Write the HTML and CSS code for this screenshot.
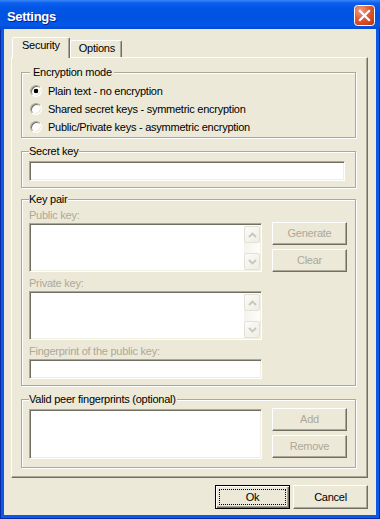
FILE: index.html
```html
<!DOCTYPE html>
<html lang="en">
<head>
    <meta charset="UTF-8">
    <title>Settings</title>
    <link rel="stylesheet" href="styles.css">
</head>
<body>
    <div class="window">
        <div class="titlebar">
            <span class="title">Settings</span>
            <span class="close">
                <svg width="21" height="21" viewBox="0 0 21 21">
                    <defs>
                        <radialGradient id="closeFill" cx="0.3" cy="0.25" r="0.9">
                            <stop offset="0" stop-color="#F0A088"/>
                            <stop offset="0.45" stop-color="#E0603D"/>
                            <stop offset="1" stop-color="#C2380F"/>
                        </radialGradient>
                    </defs>
                    <rect x="0.5" y="0.5" width="20" height="20" rx="3" fill="url(#closeFill)" stroke="#fff"/>
                    <path d="M6 6 L15 15 M15 6 L6 15" stroke="#fff" stroke-width="2.2" stroke-linecap="square"/>
                </svg>
            </span>
        </div>

        <div class="face">
            <div class="tabs">
                <div class="tab tab-active">Security</div>
                <div class="tab">Options</div>
            </div>

            <div class="panel">
                <!-- Encryption mode -->
                <fieldset class="group group-mode">
                    <legend>Encryption mode</legend>
                    <div class="option"><span class="radio checked"></span>Plain text - no encryption</div>
                    <div class="option"><span class="radio"></span>Shared secret keys - symmetric encryption</div>
                    <div class="option"><span class="radio"></span>Public/Private keys - asymmetric encryption</div>
                </fieldset>

                <!-- Secret key -->
                <fieldset class="group group-secret">
                    <legend>Secret key</legend>
                    <input class="edit edit-wide" type="text">
                </fieldset>

                <!-- Key pair -->
                <fieldset class="group group-pair">
                    <legend>Key pair</legend>
                    <div class="pair">
                        <div class="fields">
                            <div class="field-label">Public key:</div>
                            <div class="memo">
                                <div class="scrollbar">
                                    <span class="scroll-btn"><svg width="9" height="6" viewBox="0 0 9 6"><path d="M1 5 L4.5 1.5 L8 5" fill="none" stroke="#C9C6B8" stroke-width="1.8"/></svg></span>
                                    <span class="scroll-btn"><svg width="9" height="6" viewBox="0 0 9 6"><path d="M1 1 L4.5 4.5 L8 1" fill="none" stroke="#C9C6B8" stroke-width="1.8"/></svg></span>
                                </div>
                            </div>
                            <div class="field-label">Private key:</div>
                            <div class="memo">
                                <div class="scrollbar">
                                    <span class="scroll-btn"><svg width="9" height="6" viewBox="0 0 9 6"><path d="M1 5 L4.5 1.5 L8 5" fill="none" stroke="#C9C6B8" stroke-width="1.8"/></svg></span>
                                    <span class="scroll-btn"><svg width="9" height="6" viewBox="0 0 9 6"><path d="M1 1 L4.5 4.5 L8 1" fill="none" stroke="#C9C6B8" stroke-width="1.8"/></svg></span>
                                </div>
                            </div>
                            <div class="field-label">Fingerprint of the public key:</div>
                            <input class="edit" type="text" disabled>
                        </div>
                        <div class="side">
                            <button class="btn" disabled>Generate</button>
                            <button class="btn" disabled>Clear</button>
                        </div>
                    </div>
                </fieldset>

                <!-- Peer fingerprints -->
                <fieldset class="group group-peers">
                    <legend>Valid peer fingerprints (optional)</legend>
                    <div class="pair">
                        <div class="fields">
                            <div class="memo memo-list"></div>
                        </div>
                        <div class="side">
                            <button class="btn" disabled>Add</button>
                            <button class="btn" disabled>Remove</button>
                        </div>
                    </div>
                </fieldset>
            </div>

            <div class="actions">
                <button class="btn btn-default"><span class="focus">Ok</span></button>
                <button class="btn btn-action">Cancel</button>
            </div>
        </div>
    </div>
</body>
</html>
```

FILE: styles.css
```css
body {
    margin: 0;
    background: #fff;
    font-family: "Liberation Sans", Arial, sans-serif;
    font-size: 11px;
    line-height: 13px;
    letter-spacing: -0.25px;
    color: #000;
}

.window {
    width: 380px;
    height: 519px;
    box-sizing: border-box;
    padding: 0 4px 4px;
    background: #0B59E6;
    box-shadow: inset 1px 0 #0A2BA8, inset -1px 0 #0A2BA8, inset 0 -1px #0A2BA8;
    display: flex;
    flex-direction: column;
}

.titlebar {
    height: 29px;
    margin: 0 -4px;
    padding: 0 5px 0 7px;
    box-sizing: border-box;
    display: flex;
    align-items: center;
    justify-content: space-between;
    background: linear-gradient(#3A86F7 0, #0B5FEE 3px, #0256E6 8px, #0052E0 18px, #0358EA 25px, #0049D4 29px);
}

.title {
    color: #fff;
    font-size: 13px;
    font-weight: bold;
    letter-spacing: -0.3px;
    line-height: 15px;
    margin-top: 3px;
    text-shadow: 1px 1px #0A1E8C;
}

.close {
    display: flex;
    margin-top: 2px;
}

.face {
    flex: 1;
    background: #ECE9D8;
    padding: 8px 8px 6px 7px;
    display: flex;
    flex-direction: column;
}

/* tabs */
.tabs {
    display: flex;
    align-items: flex-end;
    height: 20px;
    padding-left: 1px;
}

.tab {
    height: 17px;
    box-sizing: border-box;
    padding: 1px 6px 0 8px;
    border-top: 1px solid #fff;
    border-left: 1px solid #fff;
    border-right: 1px solid #716F64;
    box-shadow: inset -1px 0 #ACA899;
    border-radius: 2px 2px 0 0;
}

.tab-active {
    height: 21px;
    margin-bottom: -1px;
    padding: 1px 9px 0 9px;
    position: relative;
    z-index: 1;
    background: #ECE9D8;
}

.panel {
    flex: 1;
    border: 1px solid;
    border-color: #fff #716F64 #716F64 #fff;
    box-shadow: inset -1px -1px #ACA899;
    padding: 8px 11px 9px 9px;
}

/* group boxes */
.group {
    margin: 0;
    min-width: 0;
    border: 1px solid #ACA899;
    box-shadow: inset 1px 1px #fff, 1px 1px #fff;
    padding: 3px 8px 8px 7px;
}

.group legend {
    padding: 0 1px 0 0;
    line-height: 13px;
    background: #ECE9D8;
}

.group-mode {
    padding: 3px 8px 1px 8px;
}

.group-mode legend {
    padding: 0 2px 0 3px;
}

.group-secret {
    margin-top: 7px;
    padding: 3px 10px 6px 7px;
}

.group-pair {
    margin-top: 5px;
    padding-bottom: 6px;
}

.group-peers {
    margin-top: 7px;
    padding-top: 2px;
}

.option {
    display: flex;
    align-items: center;
    height: 18px;
}

.radio {
    width: 12px;
    height: 12px;
    box-sizing: border-box;
    margin-right: 6px;
    border-radius: 50%;
    border: 1px solid;
    border-color: #ACA899 #fff #fff #ACA899;
    box-shadow: inset 1px 1px #716F64, inset -1px -1px #ECE9D8;
    background: #fff;
}

.radio.checked {
    background: radial-gradient(circle, #000 0, #000 2px, #fff 2.6px);
}

/* edits */
.edit {
    display: block;
    width: 233px;
    height: 20px;
    box-sizing: border-box;
    margin: 0;
    padding: 0;
    font: inherit;
    background: #fff;
    border: 1px solid;
    border-color: #ACA899 #fff #fff #ACA899;
    box-shadow: inset 1px 1px #716F64, inset -1px -1px #F1EFE2;
    outline: none;
}

.edit-wide {
    width: 316px;
}

.pair {
    display: flex;
    gap: 10px;
}

.fields {
    width: 233px;
}

.field-label {
    color: #ACA899;
    margin: 5px 0 1px;
}

.field-label:first-child {
    margin-top: 0;
}

.memo {
    height: 49px;
    box-sizing: border-box;
    border: 1px solid;
    border-color: #ACA899 #fff #fff #ACA899;
    box-shadow: inset 1px 1px #716F64, inset -1px -1px #F1EFE2;
    background: #fff;
    padding: 2px 1px 1px 2px;
    display: flex;
    justify-content: flex-end;
}

.memo-list {
    height: 50px;
    margin-top: 1px;
}

.scrollbar {
    width: 16px;
    display: flex;
    flex-direction: column;
    justify-content: space-between;
    background: linear-gradient(90deg, #F4F3EE, #FDFDFA);
}

.scroll-btn {
    height: 17px;
    box-sizing: border-box;
    border: 1px solid #E3E1D6;
    border-radius: 2px;
    background: linear-gradient(135deg, #FBFBF8, #EEEDE5);
    display: flex;
    align-items: center;
    justify-content: center;
}

.side {
    display: flex;
    flex-direction: column;
    gap: 4px;
}

.group-pair .side {
    padding-top: 13px;
}

/* buttons */
.btn {
    width: 75px;
    height: 23px;
    box-sizing: border-box;
    margin: 0;
    padding: 0;
    font: inherit;
    letter-spacing: inherit;
    color: #000;
    background: #ECE9D8;
    border: 1px solid;
    border-color: #fff #716F64 #716F64 #fff;
    box-shadow: inset -1px -1px #ACA899;
}

.btn:disabled {
    color: #ACA899;
}

.actions {
    display: flex;
    justify-content: flex-end;
    gap: 3px;
    margin-top: 7px;
}

.btn-action {
    height: 24px;
}

.btn-default {
    height: 24px;
    border-color: #000;
    box-shadow: inset 1px 1px #fff, inset -1px -1px #716F64, inset -2px -2px #ACA899;
    display: flex;
    padding: 3px;
}

.focus {
    flex: 1;
    border: 1px dotted #000;
    display: flex;
    align-items: center;
    justify-content: center;
}
```
